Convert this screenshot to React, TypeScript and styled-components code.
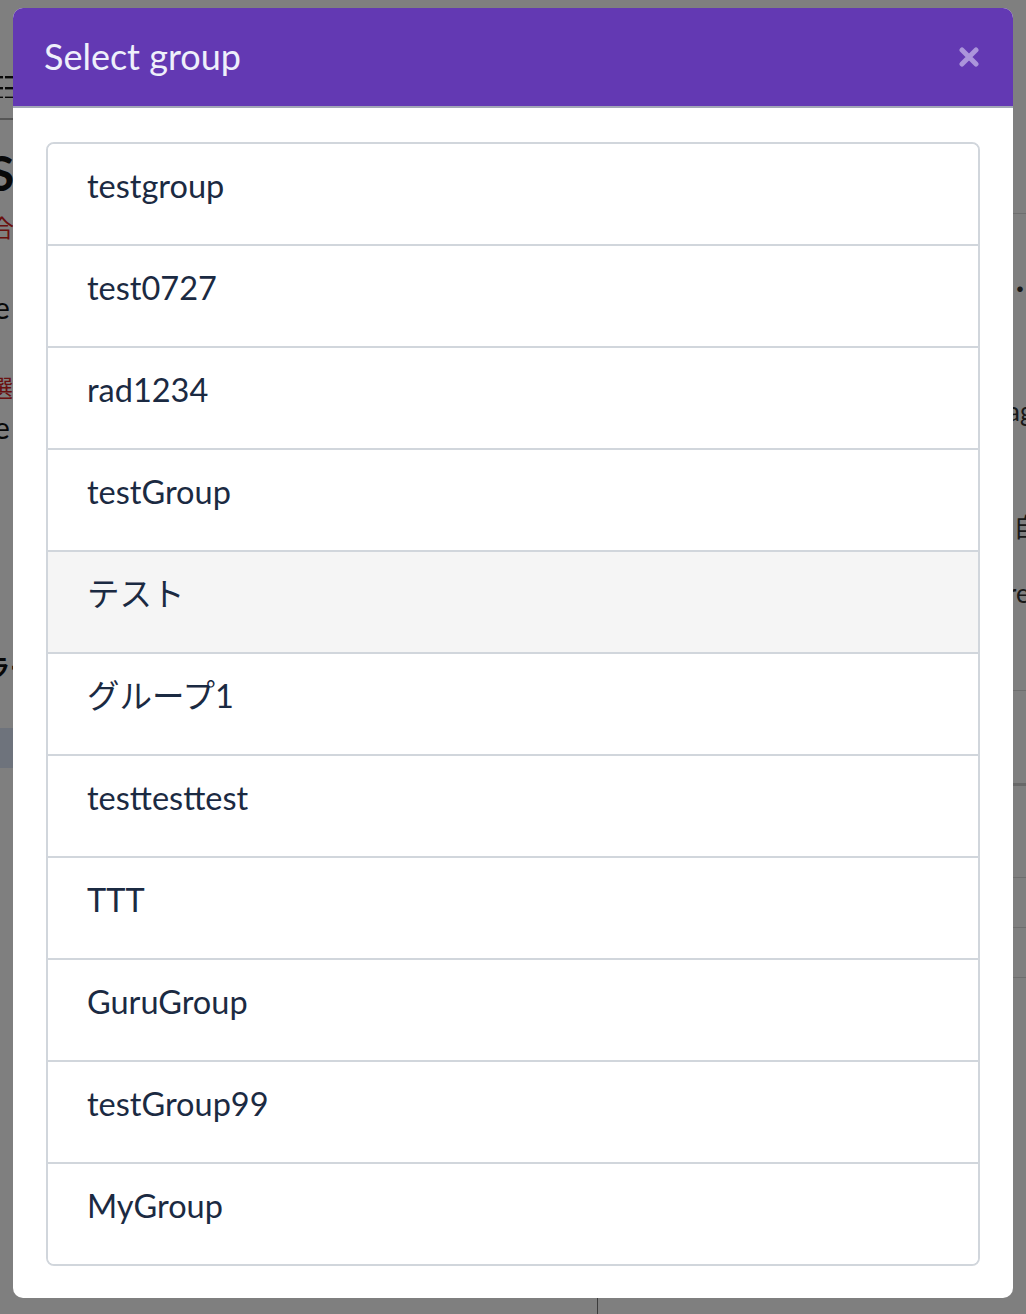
import styled, { createGlobalStyle } from "styled-components";

const groups = [
  "testgroup",
  "test0727",
  "rad1234",
  "testGroup",
  "テスト",
  "グループ1",
  "testtesttest",
  "TTT",
  "GuruGroup",
  "testGroup99",
  "MyGroup",
];

const HOVERED = 4;

const GlobalStyle = createGlobalStyle`
  html, body {
    margin: 0;
    padding: 0;
  }
  body {
    font-family: Lato, "Noto Sans CJK JP", sans-serif;
    background: #fff;
    overflow: hidden;
  }
`;

/* ---------- page behind the dialog ---------- */

const Page = styled.div`
  height: 1314px;
  display: flex;
  flex-direction: column;
  overflow: hidden;
  color: #111;
`;

const PageBody = styled.div`
  flex: 1;
  display: grid;
  grid-template-columns: 597px 1fr;
`;

const PageFooter = styled.div`
  height: 20px;
  display: grid;
  grid-template-columns: 597px 1fr;
`;

const FooterCell = styled.div`
  border-left: 1px solid #777;
`;

const LeftCol = styled.div`
  display: flex;
  flex-direction: column;
  overflow: hidden;
`;

const TopNav = styled.div`
  height: 44px;
  padding-top: 74px;
  border-bottom: 2px solid #aaa;
`;

const ListIcon = styled.svg`
  display: block;
  margin-left: -11px;
`;

const Bit = styled.div<{ $mt: number; $ml: number; $size: number; $color?: string; $bold?: boolean }>`
  margin-top: ${(p) => p.$mt}px;
  margin-left: ${(p) => p.$ml}px;
  font-size: ${(p) => p.$size}px;
  line-height: 1;
  white-space: nowrap;
  color: ${(p) => p.$color || "#111"};
  font-weight: ${(p) => (p.$bold ? 700 : 400)};
`;

const Notice = styled.div`
  margin-top: 48px;
  height: 40px;
  background: #dce6f8;
`;

const RightCol = styled.div`
  display: flex;
  flex-direction: column;
  overflow: hidden;
`;

const RightHead = styled.div`
  height: 213px;
  border-bottom: 1px solid #ddd;
`;

const RightText = styled.div<{ $mt: number }>`
  margin-top: ${(p) => p.$mt}px;
  padding-left: 410px;
  font-size: 26px;
  line-height: 1;
  white-space: nowrap;
  color: #333;
`;

const Rule = styled.div<{ $mt: number; $w?: number; $c?: string }>`
  margin-top: ${(p) => p.$mt}px;
  border-top: ${(p) => p.$w || 1}px solid ${(p) => p.$c || "#ddd"};
`;

/* ---------- dialog ---------- */

const Overlay = styled.div`
  position: fixed;
  inset: 0;
  background: rgba(0, 0, 0, 0.5);
  padding: 8px 13px;
  display: flex;
  justify-content: center;
  align-items: flex-start;
`;

const Dialog = styled.div`
  width: 1000px;
  background: #fff;
  border-radius: 10px;
  overflow: hidden;
`;

const Header = styled.div`
  height: 98px;
  background: #6339b3;
  border-bottom: 2px solid #a2a7b6;
  display: flex;
  align-items: center;
  justify-content: space-between;
  padding: 0 34px 0 31px;
`;

const Title = styled.h5`
  margin: 0;
  font-size: 36px;
  font-weight: 400;
  line-height: 1.2;
  color: #eef0fb;
`;

const CloseButton = styled.button`
  border: 0;
  background: none;
  padding: 0;
  display: flex;
  cursor: pointer;
`;

const Body = styled.div`
  padding: 34px 33px 32px;
`;

const ListGroup = styled.ul`
  margin: 0;
  padding: 0;
  list-style: none;
  border: 2px solid #d1d6dc;
  border-radius: 8px;
  overflow: hidden;
`;

const ListItem = styled.li<{ $hover?: boolean }>`
  height: 102px;
  box-sizing: border-box;
  padding: 22px 39px;
  font-size: 32.5px;
  line-height: 1.2;
  color: #1b2a42;
  background: ${(p) => (p.$hover ? "#f5f5f5" : "#fff")};
  border-bottom: 2px solid #d1d6dc;
  cursor: pointer;

  &:last-child {
    height: 100px;
    border-bottom: 0;
  }
`;

export default function App() {
  return (
    <>
      <GlobalStyle />
      <Page>
        <PageBody>
          <LeftCol>
            <TopNav>
              <ListIcon width="40" height="24" viewBox="0 0 40 24">
                <g fill="#111">
                  <rect x="11" y="2" width="3" height="2.4" />
                  <rect x="16" y="2" width="24" height="2.4" />
                  <rect x="11" y="13" width="3" height="2.4" />
                  <rect x="16" y="13" width="24" height="2.4" />
                  <rect x="11" y="22.6" width="3" height="1.4" />
                  <rect x="16" y="22.6" width="24" height="1.4" />
                </g>
              </ListIcon>
            </TopNav>
            <Bit $mt={29} $ml={-12} $size={48} $bold>
              S
            </Bit>
            <Bit $mt={19} $ml={-10} $size={24} $color="#d42020">
              合
            </Bit>
            <Bit $mt={52} $ml={-6} $size={30}>
              e
            </Bit>
            <Bit $mt={54} $ml={-11} $size={24} $color="#d42020">
              選
            </Bit>
            <Bit $mt={12} $ml={-6} $size={30}>
              e
            </Bit>
            <Bit $mt={214} $ml={-14} $size={24} $bold>
              ラー
            </Bit>
            <Notice />
          </LeftCol>
          <RightCol>
            <RightHead />
            <RightText $mt={62}>・そ</RightText>
            <RightText $mt={96}>age</RightText>
            <RightText $mt={90}>|自動</RightText>
            <RightText $mt={40}>re</RightText>
            <Rule $mt={84} />
            <Rule $mt={92} $w={3} $c="#d0d0d0" />
            <Rule $mt={91} />
            <Rule $mt={49} />
            <Rule $mt={49} />
          </RightCol>
        </PageBody>
        <PageFooter>
          <div />
          <FooterCell />
        </PageFooter>
      </Page>

      <Overlay>
        <Dialog>
          <Header>
            <Title>Select group</Title>
            <CloseButton aria-label="Close">
              <svg width="20" height="20" viewBox="0 0 20 20">
                <path
                  d="M3 3 L17 17 M17 3 L3 17"
                  stroke="#ab95db"
                  strokeWidth="5"
                  strokeLinecap="round"
                />
              </svg>
            </CloseButton>
          </Header>
          <Body>
            <ListGroup>
              {groups.map((name, i) => (
                <ListItem key={i} $hover={i === HOVERED}>
                  {name}
                </ListItem>
              ))}
            </ListGroup>
          </Body>
        </Dialog>
      </Overlay>
    </>
  );
}
